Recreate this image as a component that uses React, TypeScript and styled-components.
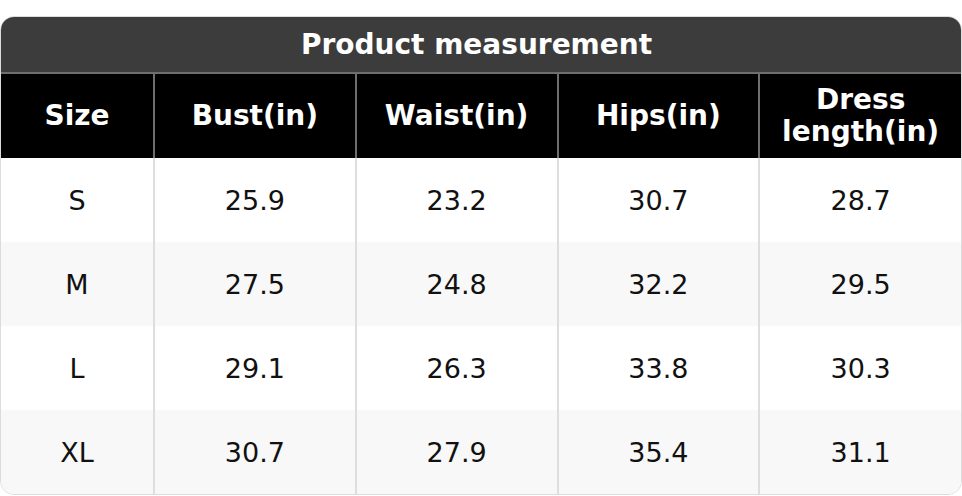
import React from 'react';
import styled, {createGlobalStyle} from 'styled-components';

const GlobalStyle = createGlobalStyle`
    html, body {
        margin: 0;
        padding: 0;
        background: #ffffff;
        font-family: "DejaVu Sans", Verdana, sans-serif;
    }
`

const columns = ['Size', 'Bust(in)', 'Waist(in)', 'Hips(in)', 'Dress length(in)'];

const rows = [
    ['S', '25.9', '23.2', '30.7', '28.7'],
    ['M', '27.5', '24.8', '32.2', '29.5'],
    ['L', '29.1', '26.3', '33.8', '30.3'],
    ['XL', '30.7', '27.9', '35.4', '31.1'],
];

export default function App() {
    return (
        <>
            <GlobalStyle/>
            <Page>
                <Card>
                    <Title>Product measurement</Title>
                    <Table>
                        <colgroup>
                            <col style={{width: 153}}/>
                            <col/>
                            <col/>
                            <col/>
                            <col/>
                        </colgroup>
                        <thead>
                        <tr>
                            {columns.map(c => (
                                <HeadCell key={c}>{c === 'Dress length(in)' ? <>Dress<br/>length(in)</> : c}</HeadCell>
                            ))}
                        </tr>
                        </thead>
                        <tbody>
                        {rows.map((r, i) => (
                            <Row key={r[0]} striped={i % 2 === 1}>
                                {r.map((v, j) => <Cell key={j}>{v}</Cell>)}
                            </Row>
                        ))}
                        </tbody>
                    </Table>
                </Card>
            </Page>
        </>
    );
}

const Page = styled.div`
    padding-top: 16px;
    width: 962px;
`

const Card = styled.div`
    width: 962px;
    border-radius: 14px;
    overflow: hidden;
    border: 1px solid #dcdcdc;
    box-sizing: border-box;
`

const Title = styled.div`
    height: 55px;
    padding-right: 9px;
    background: #3c3c3c;
    color: #ffffff;
    font-weight: 700;
    font-size: 28px;
    display: flex;
    align-items: center;
    justify-content: center;
    border-bottom: 2px solid #6e6e6e;
`

const Table = styled.table`
    width: 100%;
    border-collapse: collapse;
    table-layout: fixed;
`

const HeadCell = styled.th`
    height: 84px;
    padding: 0;
    background: #000000;
    color: #ffffff;
    font-size: 28px;
    font-weight: 700;
    line-height: 32px;
    text-align: center;
    border-left: 2px solid #6e6e6e;

    &:first-child {
        border-left: none;
    }
`

const Row = styled.tr<{ striped: boolean }>`
    background: ${p => p.striped ? '#f8f8f8' : '#ffffff'};
`

const Cell = styled.td`
    height: 84px;
    padding: 0;
    color: #111111;
    font-size: 27px;
    text-align: center;
    border-left: 2px solid #dedede;

    &:first-child {
        border-left: none;
    }
`
